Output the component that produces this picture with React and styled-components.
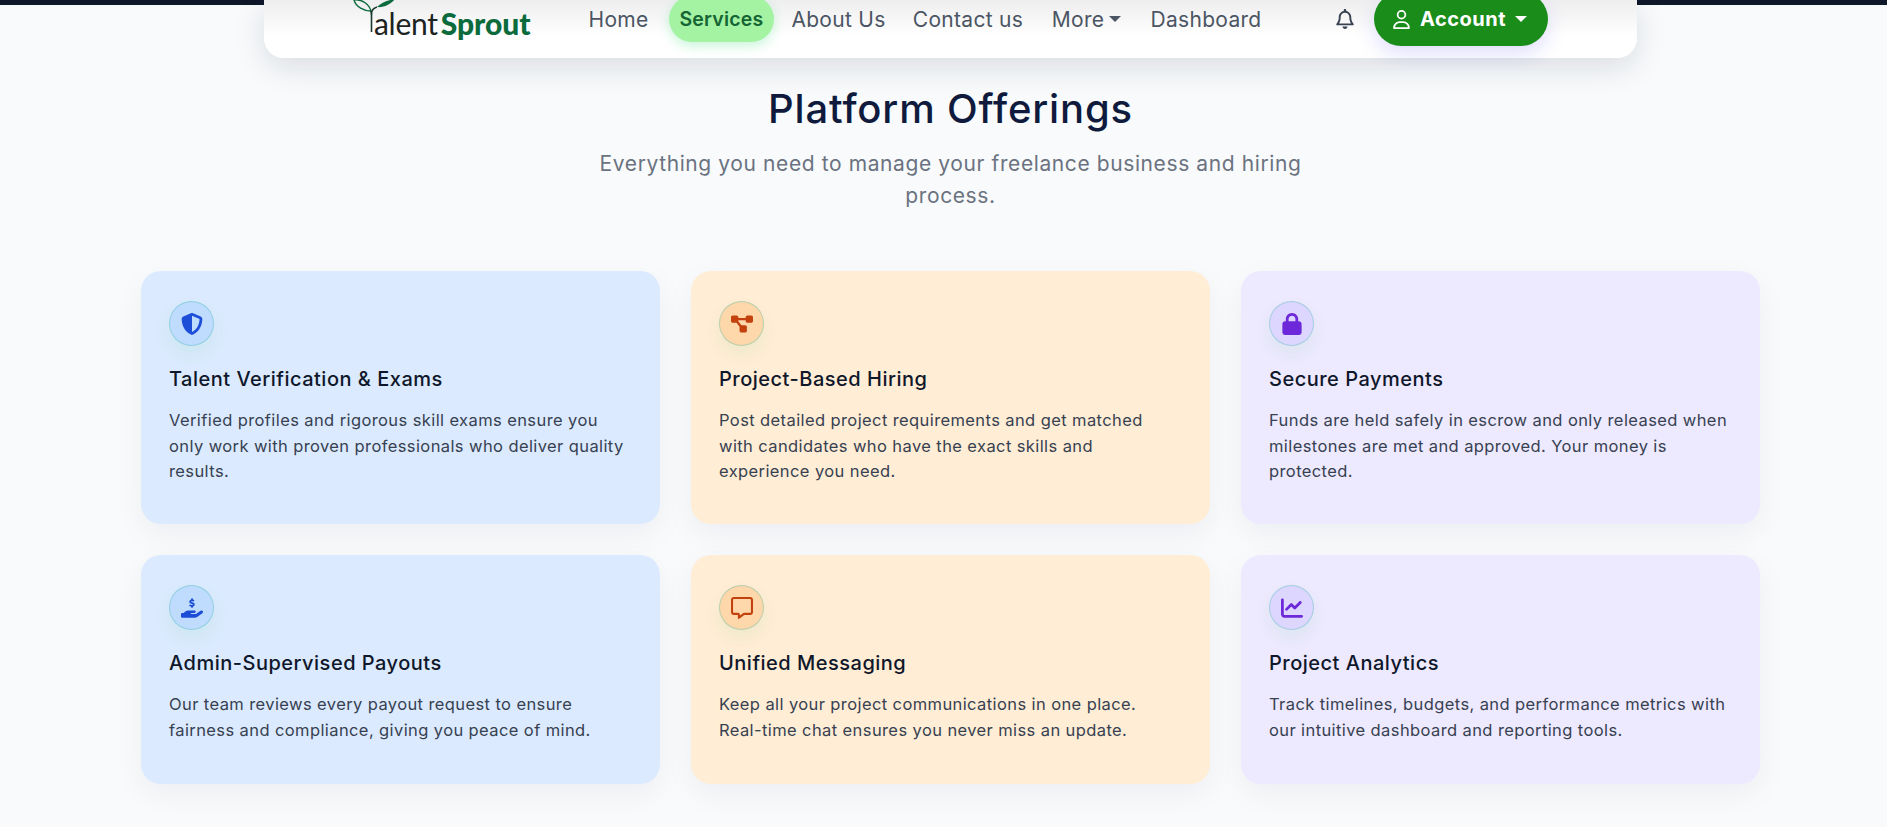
import React from "react";
import styled, { createGlobalStyle } from "styled-components";
import {
  FaShieldHalved,
  FaDiagramProject,
  FaLock,
  FaHandHoldingDollar,
  FaRegMessage,
  FaChartLine,
  FaRegBell,
  FaRegUser,
} from "react-icons/fa6";

const GlobalStyle = createGlobalStyle`
  html, body {
    margin: 0;
    height: 100%;
    overflow: hidden;
    background: #f8fafc;
    font-family: Inter, "Open Sans", sans-serif;
  }
  * { box-sizing: border-box; }
`;

const TopBar = styled.div`
  height: 5px;
  background: #0f172a;
`;

const Nav = styled.header`
  position: relative;
  width: 1373px;
  margin: -9px 0 0 264px;
  height: 62px;
  padding: 0 0 16px 89px;
  display: flex;
  align-items: center;
  background: linear-gradient(#ececed 0, #fff 40px);
  border-radius: 0 0 20px 20px;
  box-shadow: 0 10px 30px rgba(15, 23, 42, 0.12);
`;

const Logo = styled.div`
  position: relative;
  width: 178px;
  margin-right: 47px;
  padding-left: 21px;
  display: flex;
  align-items: baseline;
  font-family: Lato, sans-serif;
  font-size: 30px;
  line-height: 46px;
  margin-top: 8px;
`;

const LogoThin = styled.span`
  color: #1c2321;
  letter-spacing: -0.3px;
`;

const LogoBold = styled.span`
  color: #0b6b3c;
  font-weight: 900;
  margin-left: 3px;
`;

const LogoMark = styled.svg`
  position: absolute;
  left: 0;
  top: 0;
  width: 44px;
  height: 34px;
  overflow: visible;
`;

const Links = styled.nav`
  display: flex;
  align-items: center;
  gap: 10px;
`;

const NavLink = styled.a`
  height: 46px;
  padding: 0;
  display: flex;
  align-items: center;
  gap: 5px;
  width: ${(p) => p.$w}px;
  justify-content: center;
  font-size: ${(p) => (p.$active ? 19.5 : 21)}px;
  letter-spacing: ${(p) => (p.$active ? 0.2 : 0.3)}px;
  white-space: nowrap;
  color: ${(p) => (p.$active ? "#166534" : "#4b5563")};
  font-weight: ${(p) => (p.$active ? 600 : 400)};
  background: ${(p) => (p.$active ? "#a3f3a3" : "transparent")};
  border-radius: 24px;
  box-shadow: ${(p) => (p.$active ? "0 4px 12px rgba(74, 222, 128, 0.3)" : "none")};
`;

const Caret = styled.span`
  width: 0;
  height: 0;
  border-left: 6px solid transparent;
  border-right: 6px solid transparent;
  border-top: 6px solid ${(p) => p.$color || "#4b5563"};
`;

const Bell = styled.span`
  display: flex;
  margin-left: 63px;
  margin-right: 19px;
  color: #374151;
  font-size: 20px;
`;

const AccountButton = styled.button`
  width: 174px;
  height: 54px;
  padding: 0 3px 0 0;
  border: 0;
  display: flex;
  align-items: center;
  justify-content: center;
  gap: 9px;
  font-family: inherit;
  font-size: 20px;
  font-weight: 700;
  letter-spacing: 0.5px;
  color: #fff;
  background: #1a8c1a;
  border-radius: 27px;
  box-shadow: 0 8px 20px rgba(99, 102, 241, 0.2);
`;

const Section = styled.main`
  width: 1619px;
  margin-left: 141px;
`;

const Heading = styled.h1`
  margin: 25px 0 0;
  text-align: center;
  font-size: 40px;
  line-height: 52px;
  font-weight: 500;
  letter-spacing: 0.85px;
  color: #0f1a3d;
`;

const Sub = styled.p`
  width: 720px;
  margin: 13px auto 0;
  text-align: center;
  font-size: 21px;
  line-height: 32px;
  letter-spacing: 0.6px;
  color: #6b7280;
`;

const Grid = styled.div`
  margin-top: 59px;
  display: grid;
  grid-template-columns: repeat(3, 1fr);
  gap: 31px;
`;

const tones = {
  blue: { bg: "#dbeafe", circle: "#bfdbfe", icon: "#1d4ed8" },
  orange: { bg: "#ffedd5", circle: "#fed7aa", icon: "#c2410c" },
  purple: { bg: "#ede9fe", circle: "#ddd6fe", icon: "#6d28d9" },
};

const Card = styled.article`
  padding: 30px 30px 30px 28px;
  min-height: ${(p) => p.$h}px;
  background: ${(p) => tones[p.$tone].bg};
  border-radius: 20px;
  box-shadow: 0 10px 30px rgba(15, 23, 42, 0.05);
`;

const IconCircle = styled.div`
  width: 45px;
  height: 45px;
  display: flex;
  align-items: center;
  justify-content: center;
  font-size: 22px;
  color: ${(p) => tones[p.$tone].icon};
  background: ${(p) => tones[p.$tone].circle};
  border: 1px solid rgba(56, 189, 176, 0.35);
  border-radius: 50%;
  box-shadow: 0 8px 16px rgba(34, 197, 94, 0.08);
`;

const CardTitle = styled.h3`
  margin: 20px 0 0;
  font-size: 20px;
  line-height: 26px;
  font-weight: 500;
  letter-spacing: 0.5px;
  color: #0f172a;
`;

const CardText = styled.p`
  margin: 16px 0 0;
  font-size: 16.5px;
  line-height: 25.6px;
  letter-spacing: 0.4px;
  color: #374151;
`;

const cards = [
  {
    tone: "blue",
    h: 253,
    Icon: FaShieldHalved,
    title: "Talent Verification & Exams",
    text: "Verified profiles and rigorous skill exams ensure you only work with proven professionals who deliver quality results.",
  },
  {
    tone: "orange",
    h: 253,
    Icon: FaDiagramProject,
    title: "Project-Based Hiring",
    text: "Post detailed project requirements and get matched with candidates who have the exact skills and experience you need.",
  },
  {
    tone: "purple",
    h: 253,
    Icon: FaLock,
    title: "Secure Payments",
    text: "Funds are held safely in escrow and only released when milestones are met and approved. Your money is protected.",
  },
  {
    tone: "blue",
    h: 229,
    Icon: FaHandHoldingDollar,
    title: "Admin-Supervised Payouts",
    text: "Our team reviews every payout request to ensure fairness and compliance, giving you peace of mind.",
  },
  {
    tone: "orange",
    h: 229,
    Icon: FaRegMessage,
    title: "Unified Messaging",
    text: "Keep all your project communications in one place. Real-time chat ensures you never miss an update.",
  },
  {
    tone: "purple",
    h: 229,
    Icon: FaChartLine,
    title: "Project Analytics",
    text: "Track timelines, budgets, and performance metrics with our intuitive dashboard and reporting tools.",
  },
];

const App = () => (
  <>
    <GlobalStyle />
    <TopBar />
    <Nav>
      <Logo>
        <LogoMark viewBox="0 0 44 34">
          <path d="M18 11C11 11 3 7 1 0c8-1 15 4 17 11z" fill="none" stroke="#0b6b3c" strokeWidth="1.4" />
          <path d="M24 7c5-5 12-7 18-8-4 5-11 9-18 8z" fill="#0b6b3c" />
          <path d="M18.5 32V14c0-3 2-6 5.500-7" fill="none" stroke="#1c3a2c" strokeWidth="1.6" />
          <path d="M18.500 15c0-2-.5-3-1-4" fill="none" stroke="#1c3a2c" strokeWidth="1.4" />
        </LogoMark>
        <LogoThin>alent</LogoThin>
        <LogoBold>Sprout</LogoBold>
      </Logo>
      <Links>
        <NavLink $w={81}>Home</NavLink>
        <NavLink $w={105} $active>Services</NavLink>
        <NavLink $w={109}>About Us</NavLink>
        <NavLink $w={130}>Contact us</NavLink>
        <NavLink $w={87}>
          More <Caret />
        </NavLink>
        <NavLink $w={132}>Dashboard</NavLink>
      </Links>
      <Bell>
        <FaRegBell />
      </Bell>
      <AccountButton>
        <FaRegUser size={19} />
        Account
        <Caret $color="#fff" />
      </AccountButton>
    </Nav>
    <Section>
      <Heading>Platform Offerings</Heading>
      <Sub>Everything you need to manage your freelance business and hiring process.</Sub>
      <Grid>
        {cards.map(({ tone, h, Icon, title, text }) => (
          <Card key={title} $tone={tone} $h={h}>
            <IconCircle $tone={tone}>
              <Icon />
            </IconCircle>
            <CardTitle>{title}</CardTitle>
            <CardText>{text}</CardText>
          </Card>
        ))}
      </Grid>
    </Section>
  </>
);

export default App;
